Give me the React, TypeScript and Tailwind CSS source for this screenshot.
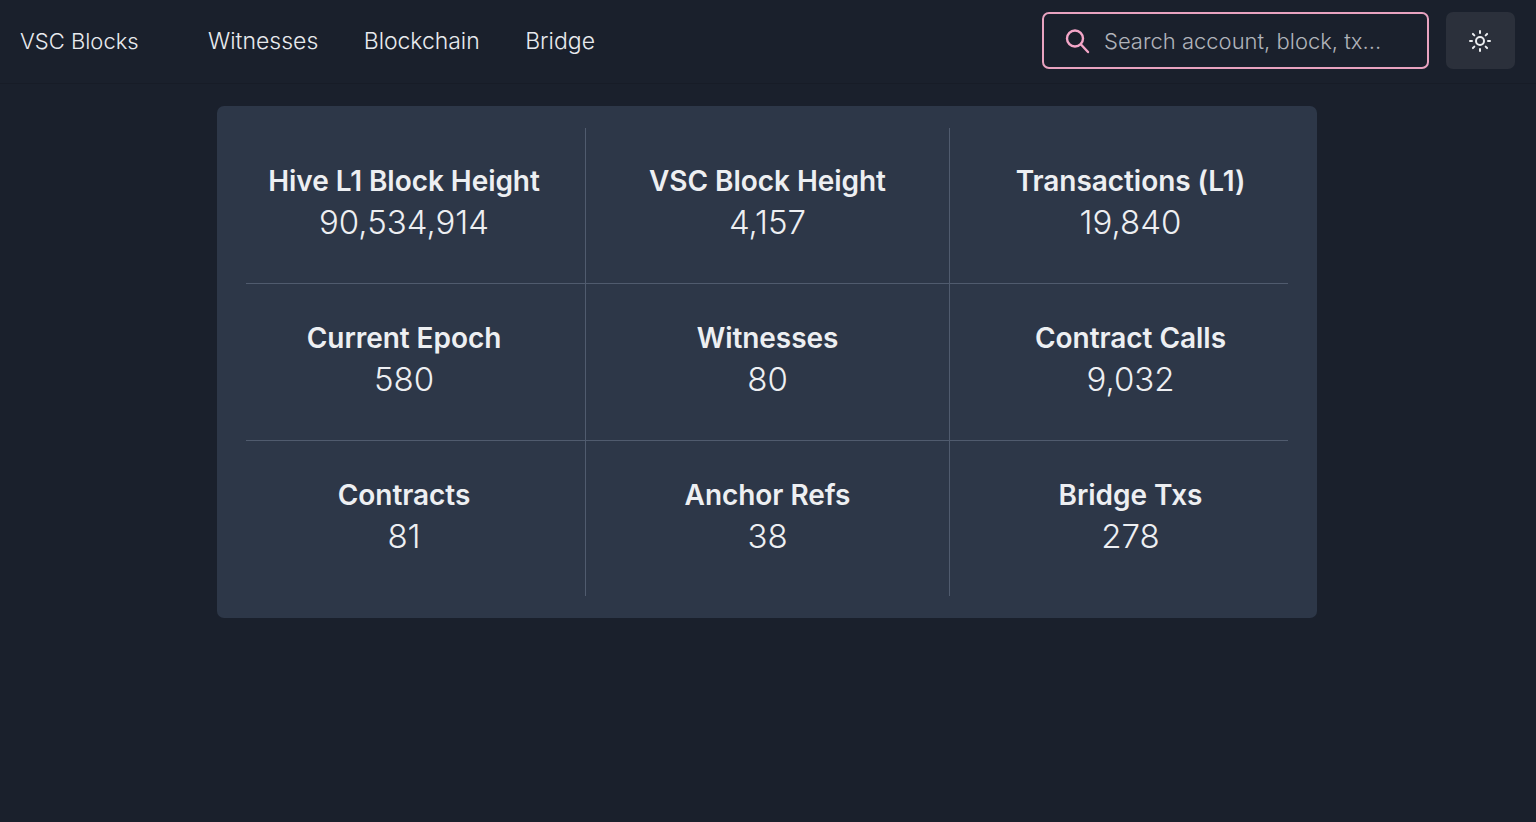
import { Sun } from "lucide-react";

const stats = [
  { label: "Hive L1 Block Height", value: "90,534,914" },
  { label: "VSC Block Height", value: "4,157" },
  { label: "Transactions (L1)", value: "19,840" },
  { label: "Current Epoch", value: "580" },
  { label: "Witnesses", value: "80" },
  { label: "Contract Calls", value: "9,032" },
  { label: "Contracts", value: "81" },
  { label: "Anchor Refs", value: "38" },
  { label: "Bridge Txs", value: "278" },
];

const cellClasses = [
  "pr-[23px] border-r",
  "border-r",
  "pl-[23px]",
];

const rowClasses = [
  "h-[156px] pt-[34px] border-b",
  "h-[157px] pt-[35px] border-b",
  "h-[155px] pt-[35px]",
];

export default function App() {
  return (
    <div className="min-h-[822px] bg-[#1a202c] font-['Inter',sans-serif] text-[#f3f4f6] overflow-hidden">
      {/* Top bar */}
      <nav className="h-[84px] flex items-center pl-5 pr-[21px] border-b border-[#171c27]">
        <span className="text-[22px] w-[188px] text-[#e8eaee] font-light">VSC Blocks</span>
        <div className="flex items-center gap-[45.5px] text-[23px] text-[#e8eaee] font-light">
          <a>Witnesses</a>
          <a className="tracking-[-0.05px]">Blockchain</a>
          <a>Bridge</a>
        </div>
        <div className="ml-auto flex items-center gap-[17px] -mt-[2px]">
          <div className="w-[387px] h-[57px] flex items-center rounded-[7px] border-2 border-[#e8a3c0] pl-[20px]">
            <svg viewBox="0 0 26 26" className="w-[26px] h-[26px] shrink-0" fill="none" stroke="#f4a6c8" strokeWidth={2.4} strokeLinecap="round">
              <circle cx="11" cy="10.5" r="8" />
              <line x1="17" y1="16.5" x2="24" y2="24" />
            </svg>
            <span className="ml-[14px] pt-[2px] text-[22px] text-[#b0b3ba] font-light">Search account, block, tx...</span>
          </div>
          <button className="w-[69px] h-[57px] pr-[1px] rounded-[7px] bg-[#2b303b] flex items-center justify-center">
            <Sun className="w-[24px] h-[24px] text-[#eceef1]" strokeWidth={2} />
          </button>
        </div>
      </nav>

      {/* Stats */}
      <div className="w-[1100px] ml-[217px] mt-[22px] rounded-[7px] bg-[#2d3748] px-[29px] py-[22px]">
        <div className="grid grid-cols-[340px_364px_338px]">
          {stats.map((s, i) => (
            <div
              key={s.label}
              className={`flex flex-col items-center border-[#505b6e] ${cellClasses[i % 3]} ${rowClasses[Math.floor(i / 3)]}`}
            >
              <div className="text-[28px] leading-[38px] font-semibold tracking-[-0.05px] text-[#edeff2]">{s.label}</div>
              <div className="text-[33px] leading-[44px] font-light text-[#edeff2]">{s.value}</div>
            </div>
          ))}
        </div>
      </div>
    </div>
  );
}
